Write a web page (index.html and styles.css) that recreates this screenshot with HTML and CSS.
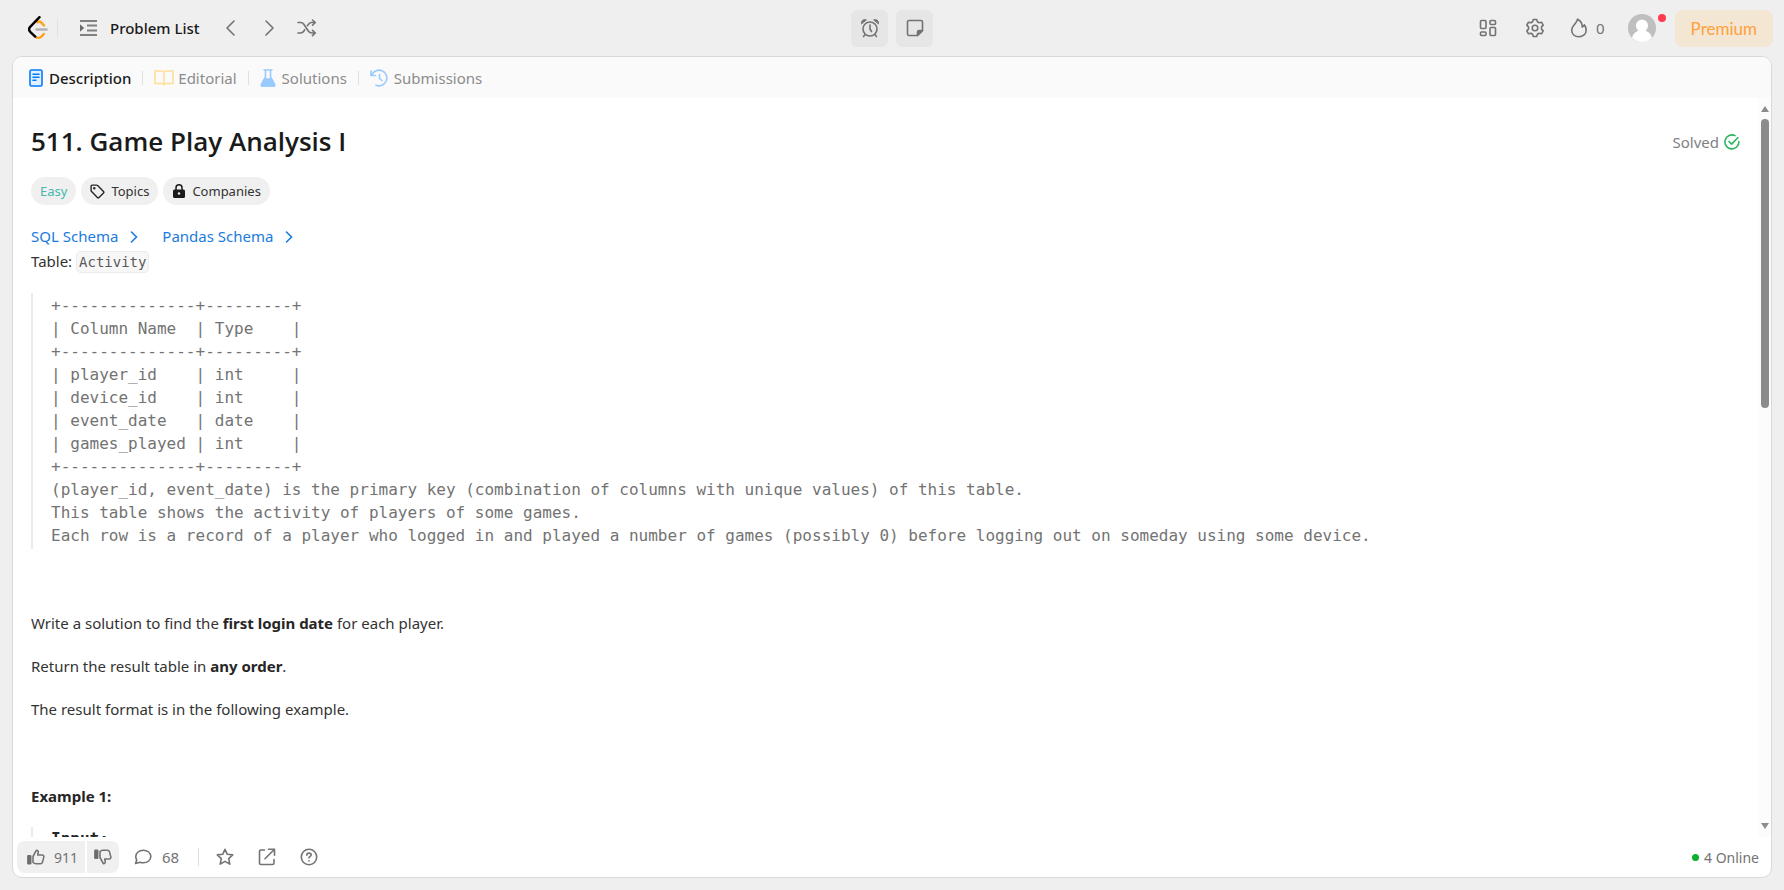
FILE: index.html
```html
<!DOCTYPE html>
<html lang="en">
<head>
  <meta charset="UTF-8">
  <meta name="viewport" content="width=device-width, initial-scale=1.0">
  <title>Game Play Analysis I</title>
  <link rel="stylesheet" href="styles.css">
</head>
<body>

<header class="topbar">
  <nav class="topbar-left">
    <a class="logo" href="#" aria-label="Home">
      <svg width="20" height="24" viewBox="0 0 20 24" fill="none" stroke-width="2.4" stroke-linecap="round">
        <path d="M8.500 13.500H18.500" stroke="#b3b3b3"/>
        <path d="M9.500 6.200c1.300-1 2.500-.8 3.500.2L16 9.300M15.800 18l-2.300 2.500c-1.600 1.700-4.300 1.800-6 .3" stroke="#ffa116"/>
        <path d="M11.500 1.200L2.200 10.800c-1.300 1.500-1.300 3.600 0 5l5 4.800" stroke="#000"/>
      </svg>
    </a>
    <span class="divider topbar-divider"></span>
    <a class="problem-list" href="#">
      <svg width="18" height="18" viewBox="0 0 18 18" fill="none" stroke="#808080" stroke-width="1.8">
        <path d="M1 2h17M8 6.500h10M8 11.500h10M1 16h17"/>
        <path d="M1 5.300v7.400L5.200 9z" fill="#6b6b6b" stroke="none"/>
      </svg>
      Problem List
    </a>
    <button class="icon-btn" aria-label="Previous">
      <svg width="12" height="18" viewBox="0 0 12 18" class="line-icon"><path d="M10 2L3 9l7 7"/></svg>
    </button>
    <button class="icon-btn" aria-label="Next">
      <svg width="12" height="18" viewBox="0 0 12 18" class="line-icon"><path d="M2 2l7 7-7 7"/></svg>
    </button>
    <button class="icon-btn" aria-label="Shuffle">
      <svg width="20" height="18" viewBox="0 0 20 18" class="line-icon">
        <path d="M1 3.500h2.500c1.500 0 2.500.7 3.300 1.800l4.700 6.900c.8 1.200 1.800 1.800 3.300 1.800H18M1 14h2.500c1.500 0 2.500-.6 3.300-1.800l.9-1.400M10.500 6.600l1-1.300c.8-1.200 1.800-1.800 3.300-1.800H18M15.500 1l2.800 2.500L15.500 6.300M15.500 11.300l2.800 2.700-2.800 2.700"/>
      </svg>
    </button>
  </nav>

  <div class="topbar-center">
    <button class="tool-btn" aria-label="Timer">
      <svg width="20" height="20" viewBox="0 0 20 20" class="line-icon">
        <circle cx="10" cy="11" r="7"/>
        <path d="M10 7v4l1.500 2.500M5.200 16.500L3.500 18.500M14.800 16.500l1.700 2"/>
        <path d="M1.500 5.500C1 3 3.500.8 6 1.800zM18.500 5.500C19 3 16.500.8 14 1.800z" fill="#6b6b6b" stroke-width="1"/>
      </svg>
    </button>
    <button class="tool-btn" aria-label="Notes">
      <svg width="18" height="18" viewBox="0 0 18 18" class="line-icon">
        <path d="M3 1.500h12a1.500 1.500 0 0 1 1.500 1.500v8.500l-5 5H3A1.500 1.500 0 0 1 1.500 15V3A1.500 1.500 0 0 1 3 1.500z"/>
        <path d="M16.500 11.500h-3.500a1.500 1.500 0 0 0-1.500 1.500v3.500z" fill="#6b6b6b"/>
      </svg>
    </button>
  </div>

  <div class="topbar-right">
    <button class="icon-btn" aria-label="Layouts">
      <svg width="18" height="18" viewBox="0 0 18 18" class="line-icon">
        <rect x="1.500" y="1.500" width="5.500" height="8" rx="1"/><rect x="11" y="1.500" width="5.500" height="4" rx="1"/>
        <rect x="1.500" y="13" width="5.500" height="3.500" rx="1"/><rect x="11" y="8.500" width="5.500" height="8" rx="1"/>
      </svg>
    </button>
    <button class="icon-btn" aria-label="Settings">
      <svg width="20" height="20" viewBox="0 0 20 20" class="line-icon">
        <path d="M8.300 1.500h3.400l.7 2.300 1.700 1 2.400-.6 1.700 2.900-1.700 1.800v2.200l1.700 1.800-1.700 2.900-2.400-.6-1.700 1-.7 2.300H8.300l-.7-2.300-1.700-1-2.400.6-1.700-2.900 1.700-1.800V8.900L1.800 7.100l1.700-2.900 2.400.6 1.700-1z"/>
        <circle cx="10" cy="10" r="2.800"/>
      </svg>
    </button>
    <button class="icon-btn streak">
      <svg width="18" height="20" viewBox="0 0 18 20" class="line-icon">
        <path d="M7.500 1.200c.3 3.300-5.800 6-5.800 11 0 4 3.200 6.600 7.200 6.600s7.300-2.700 7.300-6.600c0-2.300-.7-4-1.900-5.400-.4 1.300-1 2-2.100 2.300.2-3.400-1.500-6.300-4.700-7.900z"/>
      </svg>
      <span>0</span>
    </button>
    <a class="avatar" href="#" aria-label="Profile">
      <svg width="28" height="28" viewBox="0 0 28 28">
        <circle cx="14" cy="14" r="14" fill="#bfbfbf"/>
        <path d="M14 5.500a6 6 0 0 1 6 6c0 2.300-1 4.100-2.500 5.200 3.300.8 5.600 3.300 6.500 7a14 14 0 0 1-20 0c.9-3.700 3.200-6.200 6.500-7C9 15.600 8 13.800 8 11.500a6 6 0 0 1 6-6z" fill="#fff"/>
      </svg>
      <span class="avatar-badge"></span>
    </a>
    <a class="premium" href="#">Premium</a>
  </div>
</header>

<main class="panel">
  <nav class="tabs">
    <a class="tab tab-active" href="#">
      <svg width="14" height="18" viewBox="0 0 14 18" fill="none" stroke="#007aff" stroke-width="1.600" stroke-linecap="round">
        <rect x="1" y="1" width="12" height="16" rx="1.500" fill="#e3f0ff"/><path d="M4 5.200h6M4 8.200h6M4 11.200h3"/>
      </svg>
      Description
    </a>
    <span class="divider"></span>
    <a class="tab tab-editorial" href="#">
      <svg width="20" height="16" viewBox="0 0 20 16" fill="none" stroke="#ffdf99" stroke-width="1.600" stroke-linejoin="round">
        <path d="M10 2.500C9.500 1.500 8.500 1 7.500 1H1v12.500h6.500c1.200 0 2 .5 2.500 1.300.5-.8 1.300-1.300 2.500-1.300H19V1h-6.500c-1 0-2 .5-2.500 1.500zM10 2.500v12"/>
      </svg>
      Editorial
    </a>
    <span class="divider"></span>
    <a class="tab" href="#">
      <svg width="16" height="18" viewBox="0 0 16 18" fill="none" stroke="#99caff" stroke-width="1.600" stroke-linejoin="round">
        <path d="M3.500 1h9M5.500 1v7L1.500 15.500V17h13v-1.500L10.500 8V1"/>
        <path d="M4.500 10h7l3 6v1h-13v-1z" fill="#99caff"/>
      </svg>
      Solutions
    </a>
    <span class="divider"></span>
    <a class="tab" href="#">
      <svg width="18" height="18" viewBox="0 0 18 18" fill="none" stroke="#99caff" stroke-width="1.600" stroke-linecap="round" stroke-linejoin="round">
        <path d="M1 2v4.500h4.500M1.800 6A7.800 7.800 0 1 1 6 16.200M9.500 5.500v4l2.500 2"/>
      </svg>
      Submissions
    </a>
  </nav>

  <div class="panel-body">
    <article class="description">
      <div class="title-row">
        <h1>511. Game Play Analysis I</h1>
        <div class="solved">
          Solved
          <svg width="16" height="16" viewBox="0 0 16 16" fill="none" stroke="#2db55d" stroke-width="1.600" stroke-linecap="round" stroke-linejoin="round">
            <path d="M11 1.600A7 7 0 1 0 14.900 7.500M5 7.500l2.600 2.600L14 3.500"/>
          </svg>
        </div>
      </div>

      <div class="chips">
        <span class="chip chip-easy">Easy</span>
        <button class="chip">
          <svg width="15" height="15" viewBox="0 0 16 16" fill="none" stroke="#262626" stroke-width="1.500" stroke-linejoin="round">
            <path d="M1.200 2.200v4.600c0 .5.200 1 .5 1.300l6.200 6.300c.5.500 1.200.5 1.700 0l4.800-4.800c.5-.5.500-1.200 0-1.700L8.100 1.700c-.3-.3-.8-.5-1.300-.5H2.200a1 1 0 0 0-1 1z"/>
            <circle cx="4.600" cy="4.600" r=".6" fill="#262626"/>
          </svg>
          Topics
        </button>
        <button class="chip">
          <svg width="14" height="14" viewBox="0 0 14 14">
            <path d="M4 6V3.800a3 3 0 0 1 6 0V6" fill="none" stroke="#1a1a1a" stroke-width="1.500"/>
            <rect x="1" y="5.500" width="12" height="8.500" rx="1.500" fill="#1a1a1a"/><circle cx="7" cy="9.500" r="1.200" fill="#f0f0f0"/>
          </svg>
          Companies
        </button>
      </div>

      <div class="schemas">
        <a href="#">SQL Schema <svg width="8" height="12" viewBox="0 0 8 12"><path d="M1.500 1l5 5-5 5"/></svg></a>
        <a href="#">Pandas Schema <svg width="8" height="12" viewBox="0 0 8 12"><path d="M1.500 1l5 5-5 5"/></svg></a>
      </div>

      <p class="table-name">Table: <code>Activity</code></p>
<pre class="schema">+--------------+---------+
| Column Name  | Type    |
+--------------+---------+
| player_id    | int     |
| device_id    | int     |
| event_date   | date    |
| games_played | int     |
+--------------+---------+
(player_id, event_date) is the primary key (combination of columns with unique values) of this table.
This table shows the activity of players of some games.
Each row is a record of a player who logged in and played a number of games (possibly 0) before logging out on someday using some device.</pre>

      <div class="task">
        <p>Write a solution to find the <strong>first login date</strong> for each player.</p>
        <p>Return the result table in <strong>any order</strong>.</p>
        <p>The result format is in the following example.</p>
      </div>

      <p class="example"><strong>Example 1:</strong></p>
<pre><strong>Input:</strong></pre>
    </article>

    <div class="scrollbar">
      <span class="arrow-up"></span>
      <span class="thumb"></span>
      <span class="arrow-down"></span>
    </div>
  </div>

  <footer class="panel-foot">
    <div class="votes">
      <button class="vote vote-up">
        <svg width="18" height="16" viewBox="0 0 18 16" class="line-icon">
          <path d="M6 7.500L9.300 1.300c1.500 0 2.200 1.100 1.900 2.500L10.700 6h4.500c1.200 0 1.900 1 1.600 2.100l-1.300 5c-.3 1.100-1 1.700-2.100 1.700H9c-1.200 0-2-.5-3-1.300z"/>
          <rect x="1" y="6.500" width="3" height="8.500" fill="#6b6b6b" stroke-width="1"/>
        </svg>
        911
      </button>
      <button class="vote vote-down" aria-label="Dislike">
        <svg width="18" height="16" viewBox="0 0 18 16" class="line-icon">
          <path d="M6 8.500l3.300 6.200c1.500 0 2.200-1.100 1.900-2.500L10.700 10h4.500c1.200 0 1.900-1 1.600-2.100l-1.300-5c-.3-1.100-1-1.700-2.100-1.700H9c-1.200 0-2 .5-3 1.300z"/>
          <rect x="1" y="1" width="3" height="8.500" fill="#6b6b6b" stroke-width="1"/>
        </svg>
      </button>
    </div>
    <button class="icon-btn comments">
      <svg width="18" height="16" viewBox="0 0 18 16" class="line-icon">
        <path d="M9.300 1.200c4.200 0 7.500 2.700 7.500 6.300s-3.300 6.300-7.500 6.300c-1.200 0-2.300-.2-3.300-.6L1.500 14.500l1.300-3.500C2.100 10 1.800 8.800 1.800 7.500c0-3.600 3.300-6.300 7.500-6.300z"/>
      </svg>
      68
    </button>
    <span class="divider"></span>
    <div class="foot-actions">
      <button class="icon-btn" aria-label="Favorite">
        <svg width="18" height="18" viewBox="0 0 18 18" class="line-icon"><path d="M9 1.300l2.300 5 5.400.6-4 3.700 1.100 5.500L9 13.400l-4.800 2.700 1.100-5.500-4-3.700 5.400-.6z"/></svg>
      </button>
      <button class="icon-btn" aria-label="Share">
        <svg width="18" height="18" viewBox="0 0 18 18" class="line-icon"><path d="M6.500 2H3a1.500 1.500 0 0 0-1.500 1.500V15A1.500 1.500 0 0 0 3 16.500h11.500A1.500 1.500 0 0 0 16 15v-3.500M10.500 1.200h6v6M16.500 1.200L7 10.700"/></svg>
      </button>
      <button class="icon-btn" aria-label="Help">
        <svg width="18" height="18" viewBox="0 0 18 18" class="line-icon"><circle cx="9" cy="9" r="7.700"/><path d="M6.800 7.200c0-1.300 1-2.100 2.200-2.100s2.200.8 2.200 1.900c0 1.400-2.200 1.500-2.200 3M9 12.800v.1"/></svg>
      </button>
    </div>
    <div class="online"><span class="online-dot"></span>4 Online</div>
  </footer>
</main>

</body>
</html>
```
FILE: styles.css
```css
* {
  box-sizing: border-box;
}
body {
  margin: 0;
  height: 100vh;
  display: flex;
  flex-direction: column;
  padding: 0 12px 12px;
  background-color: #efefef;
  font-family: "Noto Sans", "Open Sans", sans-serif;
  font-size: 15px;
  color: #333;
  overflow: hidden;
}
a {
  color: inherit;
  text-decoration: none;
}
button {
  font: inherit;
  color: inherit;
  border: none;
  background: none;
  padding: 0;
  cursor: pointer;
}
svg {
  display: block;
  flex: none;
}
.line-icon {
  fill: none;
  stroke: #737373;
  stroke-width: 1.6;
  stroke-linecap: round;
  stroke-linejoin: round;
}
.icon-btn {
  display: flex;
  align-items: center;
  color: #737373;
}
.divider {
  width: 1px;
  height: 14px;
  background-color: #e0e0e0;
}

/* Top bar */
.topbar {
  display: grid;
  grid-template-columns: 1fr auto 1fr;
  align-items: center;
  height: 56px;
  flex: none;
}
.topbar-left {
  display: flex;
  align-items: center;
  padding-left: 16px;
}
.topbar-divider {
  height: 18px;
  margin: 0 21px 0 9px;
}
.problem-list {
  display: flex;
  align-items: center;
  gap: 13px;
  margin-right: 24px;
  color: #1a1a1a;
  font-weight: 500;
  white-space: nowrap;
}
.topbar-left .icon-btn + .icon-btn {
  margin-left: 28px;
}
.topbar-left .icon-btn:last-child {
  margin-left: 21px;
}
.topbar-center {
  display: flex;
  gap: 8px;
}
.tool-btn {
  display: flex;
  align-items: center;
  justify-content: center;
  width: 37px;
  height: 37px;
  border-radius: 6px;
  background-color: #e6e6e6;
}
.topbar-right {
  display: flex;
  align-items: center;
  justify-content: flex-end;
  gap: 28px;
}
.streak {
  gap: 8px;
  margin-left: -3px;
}
.avatar {
  position: relative;
  margin-left: -5px;
}
.avatar-badge {
  position: absolute;
  top: 0;
  right: -10px;
  width: 8px;
  height: 8px;
  border-radius: 50%;
  background-color: #ff3b4e;
}
.premium {
  margin: 0 -1px 0 -9px;
  padding: 0 16px;
  border-radius: 8px;
  background-color: #f3e6d3;
  color: #ffa13a;
  font-family: Lato, sans-serif;
  font-size: 17px;
  line-height: 37px;
}

/* Panel */
.panel {
  display: flex;
  flex-direction: column;
  flex: 1;
  min-height: 0;
  border: 1px solid #d9d9d9;
  border-radius: 10px;
  background-color: #fff;
  overflow: hidden;
}
.tabs {
  display: flex;
  align-items: center;
  gap: 11px;
  height: 41px;
  flex: none;
  padding: 0 16px;
  background-color: #fafafa;
  color: #8c8c8c;
}
.tab {
  display: flex;
  align-items: center;
  gap: 6px;
}
.tab-editorial {
  gap: 4px;
}
.tab-active {
  color: #1a1a1a;
  font-weight: 500;
}
.panel-body {
  display: flex;
  flex: 1;
  min-height: 0;
}
.description {
  flex: 1;
  min-width: 0;
  padding: 25px 18px 0;
  overflow: hidden;
}

/* Scrollbar */
.scrollbar {
  display: flex;
  flex-direction: column;
  align-items: center;
  width: 13px;
  padding: 8px 0;
  background-color: #fcfcfc;
}
.arrow-up,
.arrow-down {
  border-left: 4px solid transparent;
  border-right: 4px solid transparent;
}
.arrow-up {
  border-bottom: 6px solid #8b8b8b;
}
.arrow-down {
  margin-top: auto;
  border-top: 6px solid #8b8b8b;
}
.thumb {
  width: 8px;
  height: 40%;
  margin-top: 7px;
  border-radius: 4px;
  background-color: #8b8b8b;
}

/* Description */
.title-row {
  display: flex;
  align-items: center;
  justify-content: space-between;
  margin-bottom: 17px;
}
h1 {
  margin: 0;
  font-family: "Open Sans", sans-serif;
  font-size: 26px;
  font-weight: 600;
  line-height: 37px;
  color: #1a1a1a;
}
.solved {
  display: flex;
  align-items: center;
  gap: 5px;
  color: #808080;
}
.chips {
  display: flex;
  gap: 5px;
  margin-bottom: 19px;
}
.chip {
  display: flex;
  align-items: center;
  gap: 6px;
  height: 28px;
  padding: 0 9px;
  border-radius: 14px;
  background-color: #f0f0f0;
  font-size: 13px;
}
.chip-easy {
  color: #46b7ac;
}
.schemas {
  display: flex;
  gap: 24px;
  line-height: 25px;
  color: #1a7be0;
}
.schemas a {
  display: flex;
  align-items: center;
  gap: 12px;
}
.schemas path {
  fill: none;
  stroke: #1a7be0;
  stroke-width: 1.6;
  stroke-linecap: round;
}
p {
  margin: 0 0 18px;
  line-height: 25px;
}
code,
pre {
  font-family: "DejaVu Sans Mono", monospace;
}
code {
  padding: 2px;
  border: 1px solid #ebebeb;
  border-radius: 5px;
  background-color: #f7f7f7;
  color: #595959;
  font-size: 14px;
}
pre {
  margin: 0;
  padding-left: 18px;
  border-left: 2px solid #ebebeb;
  color: #737373;
  font-size: 16px;
  line-height: 23px;
}
pre strong {
  color: #262626;
}
.schema {
  padding-top: 1px;
  padding-bottom: 2px;
}
.task {
  margin-top: 62px;
}
.example {
  margin-top: 62px;
}
strong {
  color: #262626;
}

/* Footer */
.panel-foot {
  display: flex;
  align-items: center;
  height: 40px;
  flex: none;
  padding: 0 12px 0 4px;
  color: #737373;
}
.votes {
  display: flex;
  gap: 2px;
}
.vote {
  display: flex;
  align-items: center;
  gap: 9px;
  height: 32px;
  background-color: #f0f0f0;
}
.vote-up {
  padding: 0 7px 0 10px;
  border-radius: 8px 0 0 8px;
  font-size: 14px;
}
.vote-down {
  padding: 0 7px;
  border-radius: 0 8px 8px 0;
}
.comments {
  gap: 10px;
  margin: 0 19px 0 15px;
}
.panel-foot .divider {
  height: 18px;
}
.foot-actions {
  display: flex;
  gap: 24px;
  margin-left: 17px;
}
.online {
  display: flex;
  align-items: center;
  gap: 5px;
  margin-left: auto;
  font-size: 14px;
}
.online-dot {
  width: 7px;
  height: 7px;
  border-radius: 50%;
  background-color: #0caf2e;
}
```
